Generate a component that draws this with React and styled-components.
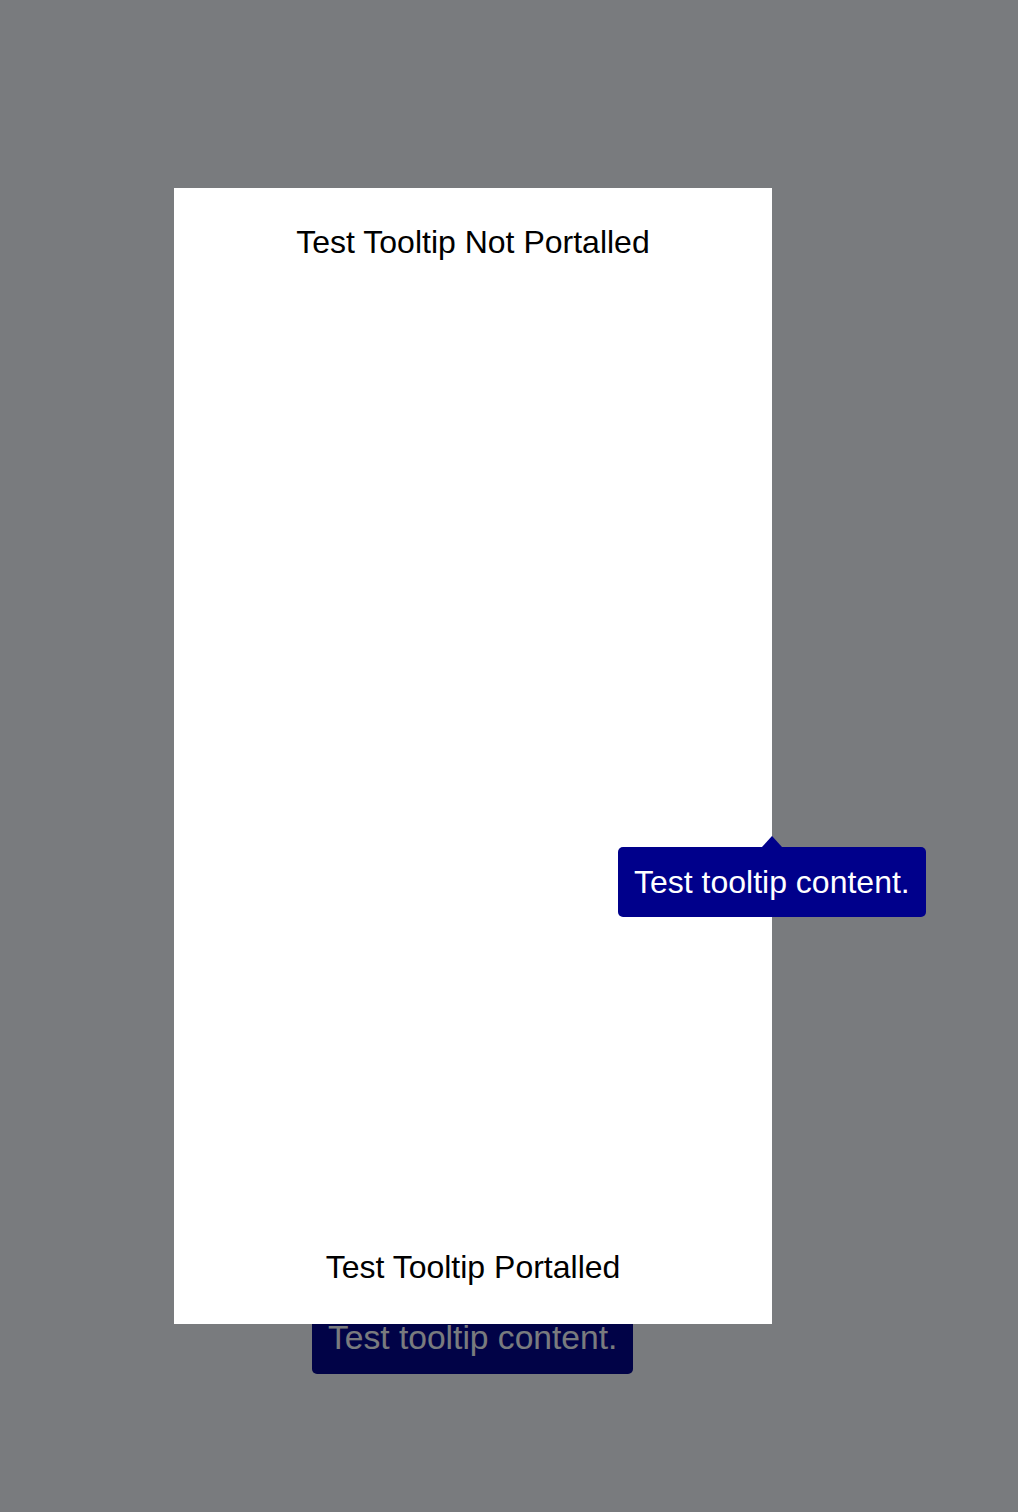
import React from "react";
import styled, { createGlobalStyle } from "styled-components";

const GlobalStyle = createGlobalStyle`
  html, body {
    margin: 0;
    padding: 0;
    background: #ffffff;
    font-family: "Liberation Sans", Arial, Helvetica, sans-serif;
  }
  body {
    min-height: 1512px;
    position: relative;
  }
`;

const Backdrop = styled.div`
  position: fixed;
  inset: 0;
  z-index: 2;
  background: rgba(2, 6, 12, 0.53);
  padding: 188px 0 0 174px;
  box-sizing: border-box;
`;

const Modal = styled.div`
  position: relative;
  width: 598px;
  height: 1136px;
  box-sizing: border-box;
  background: #ffffff;
  padding: 36px 0 38px;
  display: flex;
  flex-direction: column;
  justify-content: space-between;
  align-items: center;
`;

const Trigger = styled.span`
  font-size: 32px;
  line-height: 37px;
  color: #000000;
`;

const Tooltip = styled.div`
  position: absolute;
  left: ${(p) => p.$left}px;
  top: ${(p) => p.$top}px;
  z-index: ${(p) => p.$z || 1};
  background: #00008b;
  color: #ffffff;
  font-size: ${(p) => p.$size}px;
  line-height: ${(p) => p.$line}px;
  padding: 17px 16px;
  border-radius: 5px;
  white-space: nowrap;

  &::before {
    content: "";
    position: absolute;
    left: 50%;
    top: -11px;
    margin-left: -10px;
    border-left: 10px solid transparent;
    border-right: 10px solid transparent;
    border-bottom: 11px solid #00008b;
  }
`;

export default function App() {
  return (
    <>
      <GlobalStyle />
      <Tooltip $left={312} $top={1302} $size={33.6} $line={38} $z={1}>
        Test tooltip content.
      </Tooltip>
      <Backdrop>
        <Modal>
          <Trigger>Test Tooltip Not Portalled</Trigger>
          <Trigger>Test Tooltip Portalled</Trigger>
          <Tooltip $left={444} $top={659} $size={32} $line={36} $z={5}>
            Test tooltip content.
          </Tooltip>
        </Modal>
      </Backdrop>
    </>
  );
}
